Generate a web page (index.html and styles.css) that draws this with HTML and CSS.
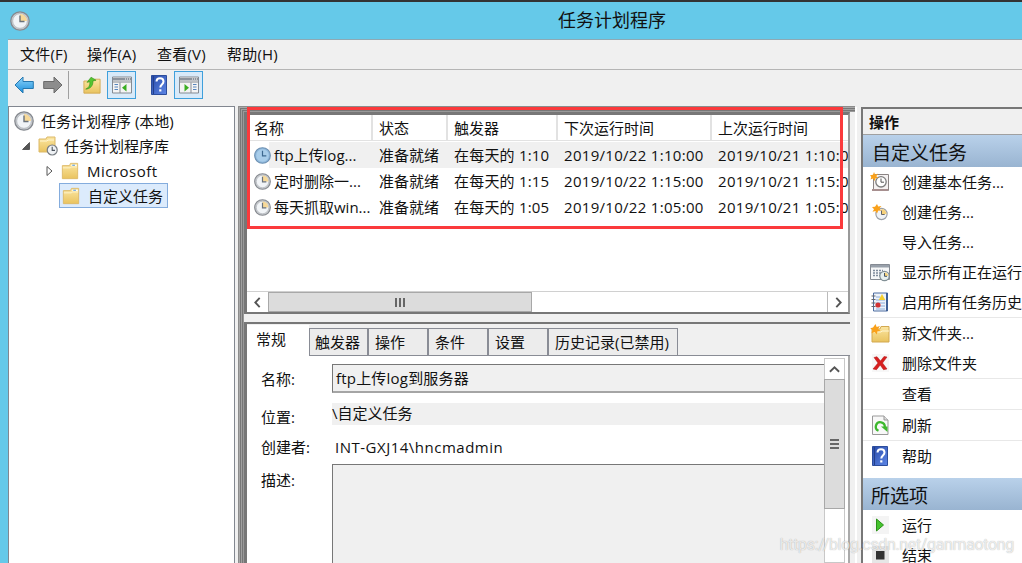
FILE: index.html
```html
<!DOCTYPE html>
<html lang="zh-CN">
<head>
    <meta charset="UTF-8">
    <meta name="viewport" content="width=device-width, initial-scale=1.0">

    <title>任务计划程序</title>
    <link rel="stylesheet" href="styles.css">
</head>
<body>
    <!-- shared icons -->
    <svg class="defs" width="0" height="0">
        <defs>
            <linearGradient id="gold" x1="0" y1="0" x2="0" y2="1">
                <stop offset="0" stop-color="#fbe6a2"/><stop offset="1" stop-color="#e9c35f"/>
            </linearGradient>
            <linearGradient id="blue" x1="0" y1="0" x2="1" y2="1">
                <stop offset="0" stop-color="#274aa8"/><stop offset="1" stop-color="#5d86e6"/>
            </linearGradient>
            <linearGradient id="sky" x1="0" y1="0" x2="0" y2="1">
                <stop offset="0" stop-color="#8ed4fa"/><stop offset="1" stop-color="#1b8fdc"/>
            </linearGradient>
        </defs>
        <symbol id="clock" viewBox="0 0 20 20">
            <circle cx="10" cy="10" r="9.2" fill="#c9ccd0" stroke="#85898f" stroke-width="1.3"/>
            <circle cx="10" cy="10" r="7.3" fill="#f1f4f7" stroke="#a5a9ae" stroke-width=".6"/>
            <path d="M10 10V3a7 7 0 0 1 7 7z" fill="#f7d998"/>
            <path d="M10 4.5V10.5H14.5" fill="none" stroke="#6a727b" stroke-width="1.4"/>
        </symbol>
        <symbol id="clock-blue" viewBox="0 0 20 20">
            <circle cx="10" cy="10" r="9.2" fill="#8fb8dc" stroke="#6d90b2" stroke-width="1.3"/>
            <circle cx="10" cy="10" r="7.3" fill="#a9cdea"/>
            <path d="M10 4.5V10.5H14.5" fill="none" stroke="#3d688f" stroke-width="1.4"/>
        </symbol>
        <symbol id="folder" viewBox="0 0 20 20">
            <path d="M1.5 4h8l1-2.5h8V18.5h-17z" fill="url(#gold)" stroke="#dcb968"/>
            <path d="M11.5 3h6v1.4h-6z" fill="#fff"/>
            <path d="M12.5 3h3v1.2h-3z" fill="#5a9ad8"/>
            <path d="M2 6.5h8.5l1-1h6.5" fill="none" stroke="#fff5cf"/>
        </symbol>
        <symbol id="folder-clock" viewBox="0 0 20 20">
            <path d="M1 3h7l1-2h8v15H1z" fill="url(#gold)" stroke="#dcb968"/>
            <path d="M2 5h7l1-1h6" fill="none" stroke="#fff5cf"/>
            <circle cx="14.2" cy="14" r="5" fill="#eef1f4" stroke="#777c82" stroke-width="1.2"/>
            <path d="M14.2 10.8V14.4H17" fill="none" stroke="#4d555e" stroke-width="1.1"/>
        </symbol>
        <symbol id="folder-up" viewBox="0 0 20 20">
            <path d="M1 5h10l1.5-2H19v15.5H1z" fill="url(#gold)" stroke="#d3a951"/>
            <path d="M3 14C7 12.500 8 9 7.500 5.800L4.500 6.500 9 .8 14.500 4.200 11 4.900C11.500 10 8 14 3 14z" fill="#55c531" stroke="#35941a" stroke-width=".7"/>
        </symbol>
        <symbol id="folder-new" viewBox="0 0 20 20">
            <path d="M2 6h8l1-2.500h8V19H2z" fill="url(#gold)" stroke="#d3a951"/>
            <path d="M3 9h8l1-1h7" fill="none" stroke="#fff5cf"/>
            <path d="M5.500 1l1.200 3 3.200-1-1.800 2.900 2.500 2-3.200.3-.5 3.300-2.200-2.500L1.500 10.300 2.400 7 .2 5.300 3 4.600z" fill="#f9a11b"/>
        </symbol>
        <symbol id="arrow-left" viewBox="0 0 20 18">
            <path d="M1 9L9 1v4.500h10.300v7H9V17z" fill="url(#sky)" stroke="#2678b0"/>
        </symbol>
        <symbol id="arrow-right" viewBox="0 0 20 18">
            <path d="M19 9L11 1v4.500H.7v7H11V17z" fill="#8d8d8d" stroke="#6b6b6b"/>
        </symbol>
        <symbol id="pane-left" viewBox="0 0 20 18">
            <path d="M.5 1h19v16H.5z" fill="#f4f4f4" stroke="#858b93"/>
            <path d="M1 2h18v2.500H1z" fill="#8c939c"/>
            <path d="M13 3h1M15 3h1M17 3h1" stroke="#fff"/>
            <path d="M1 6h18M8 6.500V17" stroke="#858b93"/>
            <path d="M2.500 8.500h3.500M2.500 11h3.500M2.500 13.500h3.500" stroke="#5685bd" stroke-width="1.200"/>
            <path d="M14.500 8v7.500L10 11.700z" fill="#3aae22"/>
        </symbol>
        <symbol id="pane-right" viewBox="0 0 20 18">
            <path d="M.5 1h19v16H.5z" fill="#f4f4f4" stroke="#858b93"/>
            <path d="M1 2h18v2.500H1z" fill="#8c939c"/>
            <path d="M13 3h1M15 3h1M17 3h1" stroke="#fff"/>
            <path d="M1 6h18M12 6.500V17" stroke="#858b93"/>
            <path d="M14 8.500h3.500M14 11h3.500M14 13.500h3.500" stroke="#5685bd" stroke-width="1.200"/>
            <path d="M5.500 8v7.500L10 11.700z" fill="#3aae22"/>
        </symbol>
        <symbol id="help" viewBox="0 0 16 20">
            <path d="M.5.5h15v19H.5z" fill="url(#blue)" stroke="#2c4d9c"/>
            <path d="M2.500 1v18" stroke="#233f8b"/>
            <path d="M5.500 6.500c0-4.500 7-4.500 7 0 0 3-3.200 3-3.200 6" fill="none" stroke="#fff" stroke-width="2"/>
            <path d="M8.200 14.300h2.200v2.200H8.200z" fill="#fff"/>
        </symbol>
        <symbol id="task-basic" viewBox="0 0 20 20">
            <path d="M3.500 2.500h15v16h-15z" fill="#f5f2f2" stroke="#8b8484"/>
            <path d="M2 17h16v2H2z" fill="#a78f8f"/>
            <circle cx="11" cy="9.800" r="5.200" fill="#fff" stroke="#7c7c7c" stroke-width="1.300"/>
            <path d="M11 6.500v3.700h3" fill="none" stroke="#555"/>
            <path d="M4 0l1 2.500 3-.8-1.700 2.500 2 1.800-2.800.2L4.800 9 3 6.500.5 7.500 1.300 5 0 3.200l3-.4z" fill="#f9a11b"/>
        </symbol>
        <symbol id="task-new" viewBox="0 0 20 20">
            <circle cx="11.500" cy="12" r="5.600" fill="#f0f3f7" stroke="#9ca1a8" stroke-width="1.200"/>
            <path d="M11.500 12V7a5 5 0 0 1 5 5z" fill="#f7d27c"/>
            <path d="M11.500 8.500v4h3.200" fill="none" stroke="#666"/>
            <path d="M7 2l1.200 2.500 3.200-.6L9.500 6.500l1.700 2.200-2.900-.1L7 11.500 5.500 9l-3 .8L4 7.200 2 5l3-.2z" fill="#f9a11b"/>
        </symbol>
        <symbol id="running" viewBox="0 0 20 20">
            <path d="M.5 2.500h19v15H.5z" fill="#f6f7f8" stroke="#858b93"/>
            <path d="M1 3h18v2.500H1z" fill="#98a0aa"/>
            <path d="M3 8.500h10M3 11h8M3 13.500h7" stroke="#7f8c9c" stroke-width="1.300" stroke-dasharray="2 1"/>
            <circle cx="14.500" cy="14" r="4.700" fill="#e7f0ef" stroke="#829096" stroke-width="1.200"/>
            <path d="M14.500 14v-3.500a3.500 3.500 0 0 1 3.500 3.500z" fill="#f7d27c"/>
            <path d="M14.500 11v3.300h2.500" fill="none" stroke="#456"/>
        </symbol>
        <symbol id="history" viewBox="0 0 20 20">
            <path d="M3.500 1h14v18h-14z" fill="#edf3fb" stroke="#4c6ca0"/>
            <path d="M16 1h2v18h-2z" fill="#3e5f95"/>
            <path d="M6 5h4M6 8h9M6 11h9M6 14h9M6 17h9" stroke="#8cacd8"/>
            <path d="M1.500 4h4M1.500 7.500h4M1.500 11h4M1.500 14.500h4" stroke="#666" stroke-width="1.200"/>
            <path d="M12 2l3.300 6H8.700z" fill="#f5cf31"/>
            <circle cx="8" cy="13" r="2.600" fill="#d23232"/>
        </symbol>
        <symbol id="delete" viewBox="0 0 20 20">
            <path d="M2 1h17v18H2z" fill="#f7f7f7"/>
            <path d="M4 4.500l3-.8L10.500 8 14 3.500l3 .5-4.500 6 4.500 6-3.500.7L10.200 12l-3.700 4.700L3 16l5-6z" fill="#d71f1f" stroke="#b01010" stroke-width=".5"/>
        </symbol>
        <symbol id="refresh" viewBox="0 0 20 20">
            <path d="M2.500 1h11.500l4 4v14.500H2.500z" fill="#f8f8f8" stroke="#999"/>
            <path d="M14 1v4h4" fill="#ddd" stroke="#999"/>
            <path d="M8.500 15.800A4.500 4.500 0 1 1 14.800 12" fill="none" stroke="#3eb82e" stroke-width="2.300"/>
            <path d="M11 11.500h6.500V17z" fill="#3eb82e"/>
        </symbol>
        <symbol id="run" viewBox="0 0 20 20">
            <path d="M2 1h17v18H2z" fill="#f4f4f4"/>
            <path d="M6.500 4v12l7-6z" fill="#45c32e" stroke="#2b9118"/>
        </symbol>
        <symbol id="stop" viewBox="0 0 20 20">
            <path d="M2 1h17v18H2z" fill="#e6e6e6"/>
            <path d="M6 6h8.500v8.500H6z" fill="#333"/>
        </symbol>
    </svg>

    <div class="window">
        <div class="titlebar">
            <svg class="app-icon"><use href="#clock"/></svg>
            <span class="title">任务计划程序</span>
        </div>

        <div class="menubar">
            <span>文件(F)</span>
            <span>操作(A)</span>
            <span>查看(V)</span>
            <span>帮助(H)</span>
        </div>

        <div class="toolbar">
            <svg class="nav"><use href="#arrow-left"/></svg>
            <svg class="nav forward"><use href="#arrow-right"/></svg>
            <span class="divider"></span>
            <svg class="up"><use href="#folder-up"/></svg>
            <span class="pressed"><svg><use href="#pane-left"/></svg></span>
            <svg class="book"><use href="#help"/></svg>
            <span class="pressed"><svg><use href="#pane-right"/></svg></span>
        </div>

        <div class="main">
            <div class="tree">
                <div class="node root"><svg class="big"><use href="#clock"/></svg>任务计划程序 (本地)</div>
                <div class="node lib">
                    <svg class="twist" viewBox="0 0 8 8"><path d="M7.500 .5v7h-7z" fill="#555" stroke="#222" stroke-width=".6"/></svg>
                    <svg class="big"><use href="#folder-clock"/></svg>任务计划程序库
                </div>
                <div class="node sub">
                    <svg class="twist closed" viewBox="0 0 7 12"><path d="M1 1.500v9L6 6z" fill="#fff" stroke="#555"/></svg>
                    <svg class="fold"><use href="#folder"/></svg><span class="latin">Microsoft</span>
                </div>
                <div class="node selected"><svg class="fold"><use href="#folder"/></svg>自定义任务</div>
            </div>

            <div class="center">
                <div class="list">
                    <div class="row head">
                        <span>名称</span><span>状态</span><span>触发器</span><span>下次运行时间</span><span>上次运行时间</span>
                    </div>
                    <div class="row current">
                        <span><svg><use href="#clock-blue"/></svg>ftp上传log...</span><span>准备就绪</span><span class="trigger">在每天的 1:10</span><span class="date">2019/10/22 1:10:00</span><span class="date">2019/10/21 1:10:00</span>
                    </div>
                    <div class="row">
                        <span><svg><use href="#clock"/></svg>定时删除一...</span><span>准备就绪</span><span class="trigger">在每天的 1:15</span><span class="date">2019/10/22 1:15:00</span><span class="date">2019/10/21 1:15:00</span>
                    </div>
                    <div class="row">
                        <span><svg><use href="#clock"/></svg>每天抓取win...</span><span>准备就绪</span><span class="trigger">在每天的 1:05</span><span class="date">2019/10/22 1:05:00</span><span class="date">2019/10/21 1:05:00</span>
                    </div>
                    <div class="hscroll">
                        <span class="btn"><svg viewBox="0 0 10 10"><path d="M7 .8L3 5l4 4.200" fill="none" stroke="#555" stroke-width="1.700"/></svg></span>
                        <span class="thumb"><i></i><i></i><i></i></span>
                        <span class="btn end"><svg viewBox="0 0 10 10"><path d="M3 .8L7 5 3 9.200" fill="none" stroke="#555" stroke-width="1.700"/></svg></span>
                    </div>
                </div>

                <div class="details">
                    <div class="tabs">
                        <span class="tab active">常规</span>
                        <span class="tab first">触发器</span>
                        <span class="tab">操作</span>
                        <span class="tab">条件</span>
                        <span class="tab">设置</span>
                        <span class="tab last">历史记录(已禁用)</span>
                        <span class="rest"></span>
                    </div>
                    <div class="panel">
                        <div class="form">
                            <label>名称:</label><div class="field name">ftp上传log到服务器</div>
                            <label class="low">位置:</label><div class="field place">\自定义任务</div>
                            <label>创建者:</label><div class="field author">INT-GXJ14\hncmadmin</div>
                            <label>描述:</label><div class="field desc"></div>
                        </div>
                        <div class="vscroll">
                            <span class="btn"><svg viewBox="0 0 10 10"><path d="M.8 7L5 3l4.200 4" fill="none" stroke="#555" stroke-width="1.700"/></svg></span>
                            <span class="thumb"><i></i><i></i><i></i></span>
                        </div>
                    </div>
                </div>
                <div class="highlight"></div>
            </div>

            <div class="actions">
                <div class="caption">操作</div>
                <div class="group">自定义任务</div>
                <div class="item"><svg><use href="#task-basic"/></svg>创建基本任务...</div>
                <div class="item"><svg><use href="#task-new"/></svg>创建任务...</div>
                <div class="item"><svg></svg>导入任务...</div>
                <div class="item"><svg><use href="#running"/></svg>显示所有正在运行</div>
                <div class="item"><svg><use href="#history"/></svg>启用所有任务历史</div>
                <div class="item ruled"><svg><use href="#folder-new"/></svg>新文件夹...</div>
                <div class="item"><svg><use href="#delete"/></svg>删除文件夹</div>
                <div class="item ruled"><svg></svg>查看</div>
                <div class="item ruled"><svg><use href="#refresh"/></svg>刷新</div>
                <div class="item ruled"><svg><use href="#help"/></svg>帮助</div>
                <div class="group second">所选项</div>
                <div class="item"><svg><use href="#run"/></svg>运行</div>
                <div class="item"><svg><use href="#stop"/></svg>结束</div>
            </div>
        </div>
        <div class="watermark">https://blog.csdn.net/ganmaotong</div>
    </div>
</body>
</html>
```
FILE: styles.css
```css
* {
    box-sizing: border-box;
}

body {
    margin: 0;
    font-family: "Open Sans", "Noto Sans CJK SC", sans-serif;
    font-size: 15px;
    line-height: 20px;
    color: #111;
}

svg {
    flex: none;
}

.defs {
    position: absolute;
}

.window {
    position: relative;
    display: flex;
    flex-direction: column;
    width: 1022px;
    height: 563px;
    overflow: hidden;
    padding-left: 8px;
    background-color: #65c9e9;
    border-top: 2px solid #333;
    white-space: nowrap;
}

.titlebar {
    display: flex;
    align-items: center;
    height: 37px;
}

.app-icon {
    width: 20px;
    height: 20px;
    margin-left: 2px;
}

.title {
    margin: -2px 0 0 528px;
    font-size: 18px;
}

.menubar {
    display: flex;
    align-items: center;
    height: 31px;
    padding: 0 0 2px 12px;
    background-color: #f0f0f0;
    border-top: 1px solid #8fa9b3;
    border-bottom: 1px solid #b5b5b5;
}

.menubar span {
    width: 70px;
    letter-spacing: 0.2px;
}

.menubar span:first-child {
    width: 67px;
}

/* toolbar */
.toolbar {
    display: flex;
    align-items: center;
    height: 36px;
    padding: 0 0 6px 6px;
    background-color: #f0f0f0;
}

.nav {
    width: 20px;
    height: 18px;
}

.forward {
    margin-left: 9px;
}

.divider {
    width: 1px;
    height: 28px;
    margin: 0 14px 0 5px;
    background-color: #a0a0a0;
}

.up {
    width: 18px;
    height: 19px;
    margin-right: 6px;
}

.pressed {
    display: flex;
    align-items: center;
    justify-content: center;
    width: 29px;
    height: 28px;
    background-color: #d8eaf9;
    border: 1px solid #3fa0dc;
}

.pressed svg {
    width: 20px;
    height: 18px;
}

.book {
    width: 16px;
    height: 20px;
    margin: 0 7px 0 15px;
}

.main {
    display: flex;
    flex: 1;
    min-height: 0;
    background-color: #f0f0f0;
}

/* tree */
.tree {
    width: 227px;
    padding-top: 1px;
    background-color: #fff;
    border: 1px solid #828790;
    border-bottom: 0;
}

.node {
    display: flex;
    align-items: center;
    height: 25px;
}

.root {
    padding-left: 5px;
}

.lib {
    padding-left: 13px;
}

.sub {
    padding-left: 37px;
}

.big {
    width: 20px;
    height: 20px;
    margin-right: 7px;
}

.twist {
    width: 8px;
    height: 8px;
    margin-right: 8px;
}

.lib .big {
    margin-right: 6px;
}

.closed {
    width: 7px;
    height: 12px;
    margin-right: 8px;
}

.fold {
    width: 18px;
    height: 18px;
    margin-right: 8px;
}

.latin {
    letter-spacing: 0.5px;
}

.selected {
    width: 109px;
    margin-left: 50px;
    padding-left: 2px;
    background-color: #dcebfc;
    border: 1px solid #84acdd;
}

/* center */
.center {
    position: relative;
    display: flex;
    flex-direction: column;
    width: 617px;
    margin-left: 3px;
    padding: 6px 5px 0 6px;
    box-shadow: inset 1px 1px 0 #8c8c8c, inset 2px 2px 0 #a8a8a8, inset 3px 3px 0 #777, inset 4px 4px 0 #a0a0a0, inset 5px 5px 0 #777, inset 6px 6px 0 #999;
}

.list {
    display: flex;
    flex-direction: column;
    flex: none;
    height: 202px;
    background-color: #fff;
    border: solid #777;
    border-width: 3px 2px 2px 3px;
    border-right-color: #999;
    overflow: hidden;
}

.row {
    display: grid;
    grid-template-columns: 125px 75px 110px 154px 140px;
    align-items: center;
    height: 26px;
}

.row span {
    display: flex;
    align-items: center;
    padding-left: 7px;
}

.row svg {
    width: 17px;
    height: 17px;
    margin-right: 3px;
}

.row .date {
    letter-spacing: 0.3px;
}

.row .trigger {
    letter-spacing: 0.2px;
}

.head {
    margin-bottom: 1px;
    border-bottom: 1px solid #e2e2e2;
}

.head span {
    height: 25px;
    margin-right: -1px;
    border-right: 2px solid #e2e2e2;
}

.head span:last-child {
    border-right: 0;
}

.current {
    background: linear-gradient(to right, #fff 22px, #f0f0f0 22px);
}

.btn {
    display: flex;
    align-items: center;
    justify-content: center;
    flex: none;
    background-color: #fff;
}

.btn svg {
    width: 11px;
    height: 11px;
}

.thumb {
    display: flex;
    align-items: center;
    justify-content: center;
    gap: 2px;
    background-color: #dcdcdc;
    border: 1px solid #a8a8a8;
}

.thumb i {
    background-color: #666;
}

.hscroll {
    display: flex;
    height: 21px;
    margin-top: auto;
    border-top: 1px solid #d0d0d0;
}

.hscroll .btn {
    width: 21px;
}

.hscroll .thumb {
    width: 264px;
}

.hscroll i {
    width: 2px;
    height: 9px;
}

.hscroll .end {
    margin-left: auto;
    border-left: 1px solid #bbb;
}

.details {
    display: flex;
    flex-direction: column;
    flex: 1;
    min-height: 0;
    margin-top: 8px;
    border: solid #777;
    border-width: 2px 0 0 3px;
    background-color: #f0f0f0;
}

.tabs {
    display: flex;
    align-items: flex-end;
    height: 32px;
}

.tab {
    width: 60px;
    height: 28px;
    padding: 3px 0 0 6px;
    background-color: #ececec;
    border: 1px solid #898c95;
    border-left: 2px solid #898c95;
}

.tab + .tab {
    border-right: 0;
}

.tab.active {
    width: 62px;
    height: 31px;
    padding: 4px 0 0 9px;
    background-color: #fff;
    border: 0;
}

.tab.first {
    width: 58px;
    padding-left: 5px;
    border-left-width: 1px;
}

.tab.last {
    width: 131px;
    border-right: 1px solid #898c95;
}

.rest {
    flex: 1;
    height: 1px;
    background-color: #898c95;
}

.panel {
    display: flex;
    flex: 1;
    width: 603px;
    min-height: 0;
    padding-top: 2px;
    background-color: #fff;
    border-right: 2px solid #aaa;
}

.form {
    display: grid;
    grid-template-columns: 71px 492px;
    grid-template-rows: 29px 22px 38px 1fr;
    flex: none;
    padding: 6px 0 0 14px;
}

.form label {
    padding-top: 5px;
}

.form .low {
    padding-top: 14px;
}

.name {
    padding: 3px 0 0 3px;
    background-color: #f0f0f0;
    border: 1px solid #777;
    border-right: 0;
    border-bottom: 2px solid #a5a5a5;
    letter-spacing: 0.2px;
}

.place {
    height: 22px;
    margin-top: 10px;
    background-color: #f0f0f0;
}

.author {
    height: 38px;
    padding: 22px 0 0 3px;
    letter-spacing: 0.5px;
}

.form label:nth-of-type(3) {
    padding-top: 22px;
}

.form label:nth-of-type(4) {
    padding-top: 17px;
}

.desc {
    margin-top: 11px;
    background-color: #f0f0f0;
    border: solid #777;
    border-width: 1px 0 0 1px;
}

.vscroll {
    width: 21px;
    border: 1px solid #c8c8c8;
}

.vscroll .btn {
    height: 20px;
}

.vscroll .thumb {
    flex-direction: column;
    height: 130px;
    margin: 0 -1px;
}

.vscroll i {
    width: 9px;
    height: 2px;
}

.highlight {
    position: absolute;
    left: 9px;
    top: 1px;
    width: 596px;
    height: 122px;
    border: 3px solid #fb3a3c;
}

/* actions */
.actions {
    flex: 1;
    min-width: 0;
    margin: 1px 0 0 6px;
    overflow: hidden;
    background-color: #fff;
    border: solid #777;
    border-width: 2px 0 0 2px;
    box-shadow: -4px 0 0 #f0f0f0, -6px 0 0 #fff;
}

.caption {
    height: 26px;
    padding: 3px 0 0 6px;
    background-color: #f0f0f0;
    border-bottom: 1px solid #a0a0a0;
    font-weight: bold;
}

.group {
    height: 32px;
    padding: 9px 0 0 9px;
    background: linear-gradient(#b9d1ea, #99b4d1);
    font-size: 19px;
    line-height: 19px;
}

.second {
    margin-top: 7px;
    padding-left: 8px;
}

.item {
    display: flex;
    align-items: center;
    height: 30px;
    padding-left: 7px;
}

.item svg {
    width: 20px;
    height: 20px;
    margin-right: 12px;
}

.ruled {
    height: 31px;
    border-top: 1px solid #e8e8e8;
}

.watermark {
    position: absolute;
    right: 8px;
    bottom: 8px;
    font-family: Roboto, sans-serif;
    font-size: 16px;
    letter-spacing: -0.35px;
    color: rgba(255, 255, 255, 0.75);
    text-shadow: 0 0 1px rgba(0, 0, 0, 0.35);
}
```
